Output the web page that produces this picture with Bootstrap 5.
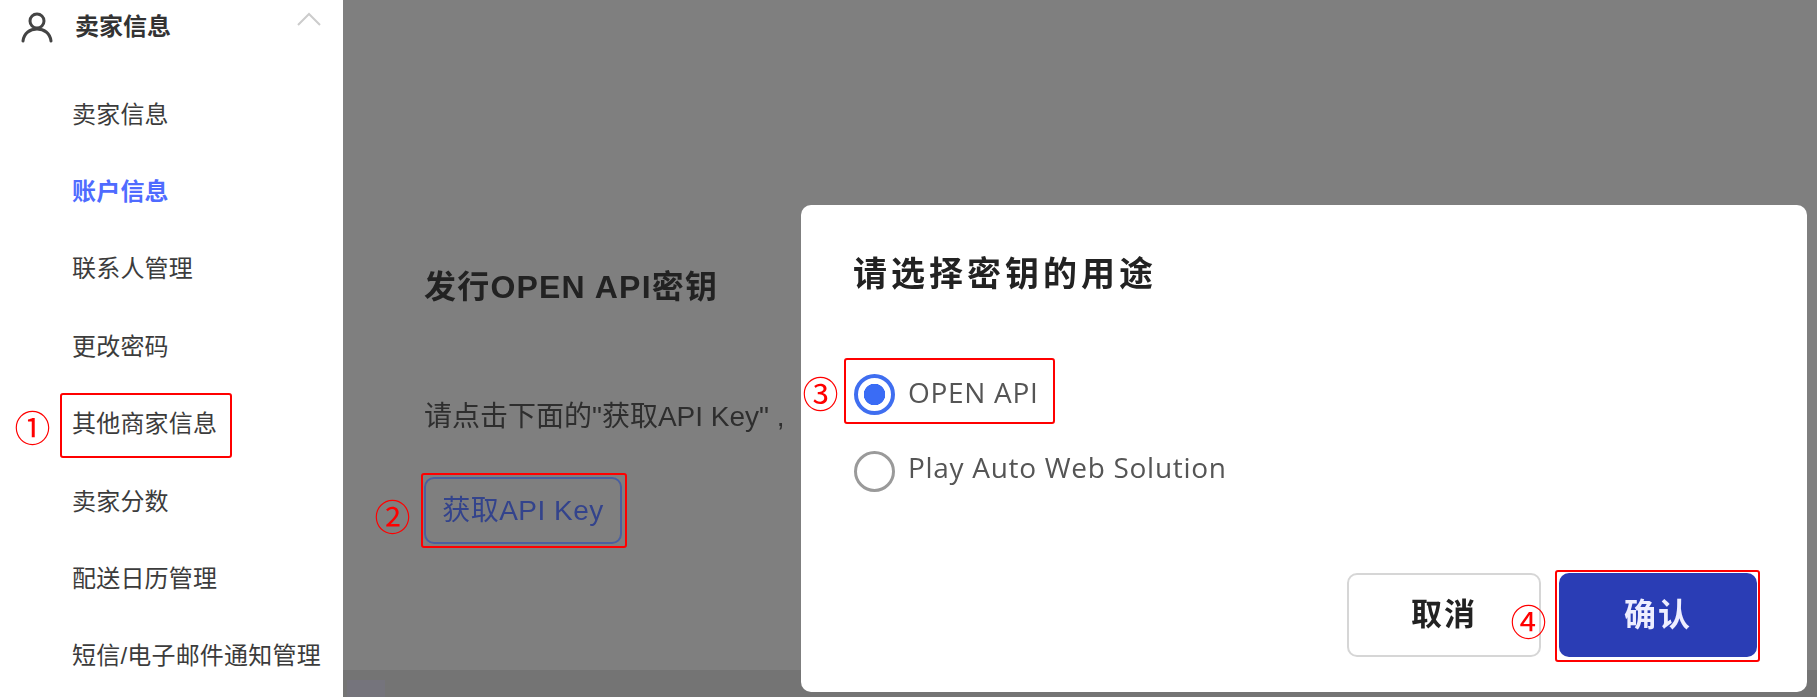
<!DOCTYPE html>
<html lang="zh-CN">
<head>
<meta charset="utf-8">
<title>发行OPEN API密钥</title>
<link href="https://cdn.jsdelivr.net/npm/bootstrap@5.3.0/dist/css/bootstrap.min.css" rel="stylesheet">
<style>
:root { --cn: "Liberation Sans", "Noto Sans CJK SC", sans-serif; }
html, body { height: 697px; overflow: hidden; }
body { font-family: var(--cn); background: #7f7f7f; position: relative; color: #333; }
.shell { height: 697px; filter: blur(.5px); }
.side { width: 343px; background: #fff; flex: none; }
.side-head { height: 54px; padding-left: 21px; padding-right: 22px; font-size: 24px; font-weight: 700; color: #333; }
.side-head svg.person { width: 32px; height: 32px; margin-right: 22px; }
.side-head svg.chev { width: 24px; height: 14px; margin-top: -16px; }
.side-menu { margin-top: 22px; padding-left: 72px; }
.side-link { height: 77.4px; font-size: 24px; letter-spacing: .2px; color: #3c3c3c; text-decoration: none; white-space: nowrap; }
.side-link.on { color: #4f6bff; font-weight: 700; }
.stage { padding: 0 0 0 81px; position: relative; }
.stage-title { font-size: 32px; letter-spacing: 1.2px; font-weight: 700; color: #222; margin: 0; padding-top: 266px; line-height: 42px; }
.stage-text { font-size: 28px; color: #2e2e2e; margin: 0; padding-top: 92px; line-height: 34px; white-space: nowrap; }
.btn-key { margin-top: 43px; width: 198px; height: 67px; border: 2px solid #4a5fa0; border-radius: 10px; background: transparent; color: #33438c; font-size: 28px; letter-spacing: .5px; padding: 0; white-space: nowrap; }
.foot-strip { position: absolute; left: 343px; right: 0; top: 670px; bottom: 0; background: #747474; }
.foot-tab { width: 38px; height: 17px; margin: 10px 0 0 4px; background: #75747c; }
.dialog { position: absolute; left: 801px; top: 205px; width: 1006px; height: 487px; background: #fff; border-radius: 10px; border: 0; padding: 51px 50px 0 52px; filter: blur(.4px); }
.dialog-title { font-size: 34px; font-weight: 700; color: #222; letter-spacing: 4px; line-height: 36px; margin: 0; }
.choice { display: flex; align-items: center; padding: 0; margin: 0; min-height: 41px; }
.choice .form-check-input { width: 41px; height: 41px; margin: 0 13px 0 1px; float: none; border: 3px solid #9a9a9a; background-color: #fff; background-image: none; }
.choice .form-check-input:checked { border: 4px solid #3f6ef0; background-color: #fff; background-image: radial-gradient(circle, #3a6cf5 0 10.5px, transparent 11px); }
.choice label { font-family: "Open Sans", sans-serif; font-size: 28px; color: #555; letter-spacing: .7px; margin-top: -6px; }
.choice + .choice label { margin-top: -9px; }
.choices { margin-top: 82px; gap: 36px; }
.dialog-foot { position: absolute; right: 50px; top: 368px; gap: 18px; }
.btn-cancel, .btn-ok { height: 84px; border-radius: 10px; font-weight: 700; padding: 0; letter-spacing: 2px; }
.btn-cancel { width: 194px; font-size: 31px; background: #fff; border: 2px solid #d6d6d6; color: #222; }
.btn-ok { width: 198px; font-size: 32px; background: #2a3db5; border: 0; color: #eef; }
.redbox { position: absolute; border: 2px solid #f00; border-radius: 3px; pointer-events: none; }
.rb1 { left: 60px; top: 393px; width: 172px; height: 65px; }
.rb2 { left: 421px; top: 473px; width: 206px; height: 75px; }
.rb3 { left: 844px; top: 358px; width: 211px; height: 66px; }
.rb4 { left: 1555px; top: 570px; width: 205px; height: 92px; }
.num { position: absolute; width: 33px; height: 33px; font-family: "Noto Sans CJK SC", sans-serif; font-size: 36px; line-height: 33px; color: #f00; display: flex; align-items: center; justify-content: center; }
.n1 { left: 16px; top: 410px; }
.n2 { left: 376px; top: 499px; }
.n3 { left: 804px; top: 376px; }
.n4 { left: 1512px; top: 604px; }
</style>
</head>
<body>
<div class="d-flex shell">
  <aside class="side">
    <div class="side-head d-flex align-items-center">
      <svg class="person" viewBox="0 0 32 32" fill="none" stroke="#444" stroke-width="3" stroke-linecap="round"><circle cx="16" cy="10" r="7"/><path d="M2 30c1-8 7-12 14-12s13 4 14 12"/></svg>
      <span class="flex-grow-1">卖家信息</span>
      <svg class="chev" viewBox="0 0 24 14" fill="none" stroke="#ccc" stroke-width="2"><path d="M1 13 12 2l11 11"/></svg>
    </div>
    <nav class="side-menu d-flex flex-column">
      <a class="side-link d-flex align-items-center" href="#">卖家信息</a>
      <a class="side-link on d-flex align-items-center" href="#">账户信息</a>
      <a class="side-link d-flex align-items-center" href="#">联系人管理</a>
      <a class="side-link d-flex align-items-center" href="#">更改密码</a>
      <a class="side-link d-flex align-items-center" href="#">其他商家信息</a>
      <a class="side-link d-flex align-items-center" href="#">卖家分数</a>
      <a class="side-link d-flex align-items-center" href="#">配送日历管理</a>
      <a class="side-link d-flex align-items-center" href="#">短信/电子邮件通知管理</a>
    </nav>
  </aside>
  <main class="stage flex-grow-1">
    <h2 class="stage-title">发行OPEN API密钥</h2>
    <p class="stage-text">请点击下面的"获取API Key" ,</p>
    <button class="btn btn-key" type="button">获取API Key</button>
  </main>
</div>
<div class="foot-strip"><div class="foot-tab"></div></div>
<div class="dialog modal-content">
  <h5 class="dialog-title">请选择密钥的用途</h5>
  <div class="choices d-flex flex-column">
    <div class="form-check choice"><input class="form-check-input" type="radio" name="use" id="r1" checked><label for="r1">OPEN API</label></div>
    <div class="form-check choice"><input class="form-check-input" type="radio" name="use" id="r2"><label for="r2">Play Auto Web Solution</label></div>
  </div>
  <div class="dialog-foot d-flex">
    <button class="btn btn-cancel" type="button">取消</button>
    <button class="btn btn-ok" type="button">确认</button>
  </div>
</div>
<div class="redbox rb1"></div><div class="redbox rb2"></div><div class="redbox rb3"></div><div class="redbox rb4"></div>
<span class="num n1">①</span><span class="num n2">②</span><span class="num n3">③</span><span class="num n4">④</span>
<script src="https://cdn.jsdelivr.net/npm/bootstrap@5.3.0/dist/js/bootstrap.bundle.min.js"></script>
</body>
</html>
